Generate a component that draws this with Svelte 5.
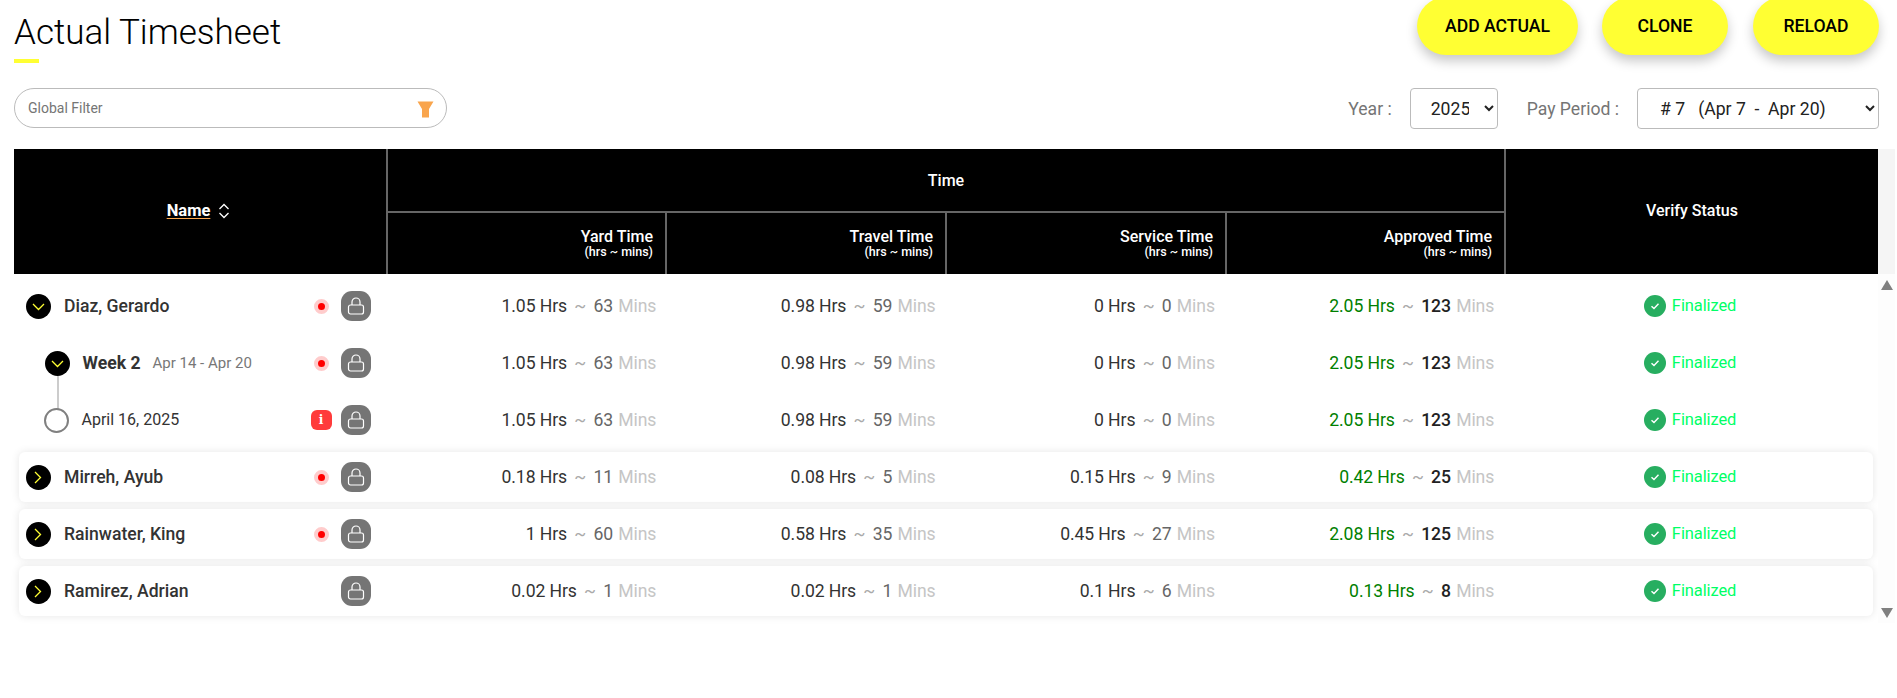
<script>
  const rows = [
    { kind: 'name', open: true, card: false, name: 'Diaz, Gerardo', flag: 'dot', vals: [['1.05', '63'], ['0.98', '59'], ['0', '0'], ['2.05', '123']] },
    { kind: 'week', open: true, card: false, name: 'Week 2', range: 'Apr 14 - Apr 20', flag: 'dot', vals: [['1.05', '63'], ['0.98', '59'], ['0', '0'], ['2.05', '123']] },
    { kind: 'day', card: false, name: 'April 16, 2025', flag: 'info', vals: [['1.05', '63'], ['0.98', '59'], ['0', '0'], ['2.05', '123']] },
    { kind: 'name', open: false, card: true, name: 'Mirreh, Ayub', flag: 'dot', vals: [['0.18', '11'], ['0.08', '5'], ['0.15', '9'], ['0.42', '25']] },
    { kind: 'name', open: false, card: true, name: 'Rainwater, King', flag: 'dot', vals: [['1', '60'], ['0.58', '35'], ['0.45', '27'], ['2.08', '125']] },
    { kind: 'name', open: false, card: true, name: 'Ramirez, Adrian', flag: '', vals: [['0.02', '1'], ['0.02', '1'], ['0.1', '6'], ['0.13', '8']] }
  ];
</script>

{#snippet chevron(open)}
  <span class="toggle">
    <svg width="13" height="13" viewBox="0 0 13 13" fill="none" stroke="#ffff33" stroke-width="1.3">
      {#if open}
        <path d="M1 4 6.5 9.5 12 4" />
      {:else}
        <path d="M3 1 8.5 6.5 3 12" />
      {/if}
    </svg>
  </span>
{/snippet}

<div class="page">
  <div class="top">
    <div class="title-block">
      <h1>Actual Timesheet</h1>
      <div class="rule"></div>
    </div>
    <div class="actions">
      <button class="add">ADD ACTUAL</button>
      <button class="short">CLONE</button>
      <button class="short">RELOAD</button>
    </div>
  </div>

  <div class="filters">
    <div class="search">
      <input placeholder="Global Filter" />
      <svg class="funnel" width="17" height="17" viewBox="0 0 17 17"><path d="M0.5 0.5H16.5L12 8V16.5H5V8Z" fill="#f9a54d" /></svg>
    </div>
    <div class="pickers">
      <span class="lbl">Year :</span>
      <select class="year"><option>2025</option></select>
      <span class="lbl pp">Pay Period :</span>
      <select class="period"><option># 7 &nbsp; (Apr 7 &nbsp;- &nbsp;Apr 20)</option></select>
    </div>
  </div>

  <div class="head-wrap">
    <div class="head">
      <div class="h-name">
        <span class="name-link">Name</span>
        <svg width="12" height="16" viewBox="0 0 12 16" fill="none" stroke="#fff" stroke-width="1.3"><path d="M1.5 6 6 1.5 10.5 6M1.5 10 6 14.5 10.5 10" /></svg>
      </div>
      <div class="h-time">
        <div class="h-time-top">Time</div>
        <div class="h-time-sub">
          {#each ['Yard Time', 'Travel Time', 'Service Time', 'Approved Time'] as t}
            <div class="h-col"><span>{t}</span><small>(hrs ~ mins)</small></div>
          {/each}
        </div>
      </div>
      <div class="h-verify">Verify Status</div>
    </div>
    <div class="sb-head"></div>
  </div>

  <div class="body-wrap">
    <div class="body">
      {#each rows as r}
        <div class="row" class:card={r.card}>
          <div class="c-name">
            {#if r.kind === 'name'}
              {@render chevron(r.open)}
              <span class="nm">{r.name}</span>
            {:else if r.kind === 'week'}
              <span class="indent">{@render chevron(r.open)}<i class="link"></i></span>
              <span class="wk">{r.name}</span>
              <span class="range">{r.range}</span>
            {:else}
              <span class="indent"><span class="ring"></span></span>
              <span class="day">{r.name}</span>
            {/if}
            <span class="flag">
              {#if r.flag === 'dot'}<span class="dot"></span>{/if}
              {#if r.flag === 'info'}<span class="info">i</span>{/if}
            </span>
            <span class="lock">
              <svg width="18" height="18" viewBox="0 0 18 18" fill="none" stroke="#fff" stroke-width="1.2">
                <rect x="1.5" y="8" width="15" height="9" rx="2" />
                <path d="M5 8V5a4 4 0 0 1 8 0V8" />
              </svg>
            </span>
          </div>
          {#each r.vals as v, i}
            <div class="c-val" class:appr={i === 3}>
              <span class="hrs">{v[0]} Hrs</span>
              <span class="tilde">~</span>
              <span class="min">{v[1]}</span>
              <span class="mins">Mins</span>
            </div>
          {/each}
          <div class="c-status">
            <svg width="22" height="22" viewBox="0 0 22 22"><circle cx="11" cy="11" r="11" fill="#27ae60" /><path d="M7.5 11.2 10 13.6 14.5 8.8" fill="none" stroke="#fff" stroke-width="1.4" /></svg>
            <span class="final">Finalized</span>
          </div>
        </div>
      {/each}
    </div>
    <div class="scrollbar">
      <i class="up"></i>
      <i class="down"></i>
    </div>
  </div>
</div>

<style>
  :global(body) {
    margin: 0;
    background: #fff;
    font-family: Roboto, "Liberation Sans", sans-serif;
    color: #333;
  }
  .page { width: 1897px; height: 698px; overflow: hidden; box-sizing: border-box; padding-left: 14px; }
  .top { display: flex; justify-content: space-between; height: 88px; padding-right: 18px; box-sizing: border-box; }
  .title-block { padding-top: 13px; }
  h1 { margin: 0; font-size: 35px; line-height: 40px; font-weight: 300; color: #000; }
  .rule { width: 25px; height: 4px; margin-top: 6px; background: #ffff33; }
  .actions { display: flex; gap: 25px; margin-top: -3px; height: 58px; }
  button {
    width: 161px; height: 58px; border: 0; border-radius: 29px; background: #ffff33; color: #000;
    font: 500 17.6px Roboto, sans-serif; box-shadow: 0 6px 12px rgba(0, 0, 0, .22);
  }
  button.add { margin-right: -1px; }
  button.short { width: 126px; }
  .filters { display: flex; justify-content: space-between; height: 61px; padding-right: 18px; }
  .search {
    width: 433px; height: 40px; box-sizing: border-box; border: 1px solid #bbb; border-radius: 20px;
    display: flex; align-items: center; padding: 0 12px 0 13px;
  }
  .funnel { margin-top: 2px; }
  .search input { flex: 1; min-width: 0; border: 0; outline: 0; padding: 0; font: 14px Roboto, sans-serif; background: none; }
  .search input::placeholder { color: #757575; opacity: 1; }
  .pickers { display: flex; align-items: flex-start; }
  .lbl { font-size: 17.6px; line-height: 42px; color: #757575; margin-right: 18px; }
  .lbl.pp { margin-left: 29px; }
  select {
    height: 41px; box-sizing: border-box; border: 1px solid #bbb; border-radius: 4px; background: #fff;
    font: 17.6px Roboto, sans-serif; color: #222; padding: 0 12px 0 16px;
  }
  .year { width: 88px; }
  .period { width: 242px; padding-left: 18px; }

  .head-wrap { display: flex; }
  .sb-head { width: 17px; background: #f5f5f5; }
  .head {
    width: 1864px; height: 125px; background: #000; color: #fff; display: grid;
    grid-template-columns: 372px 1120px 1fr; font-size: 16px; font-weight: 500;
  }
  .h-name, .h-verify { display: flex; align-items: center; justify-content: center; padding-bottom: 2px; }
  .h-name { gap: 8px; padding-right: 3px; }
  .name-link { font-size: 16.5px; font-weight: 700; text-decoration: underline; text-decoration-color: #f9a54d; text-underline-offset: 2px; }
  .h-time { border-left: 2px solid #666; border-right: 2px solid #666; display: flex; flex-direction: column; }
  .h-time-top { height: 64px; flex: none; display: flex; align-items: center; justify-content: center; border-bottom: 2px solid #666; box-sizing: border-box; }
  .h-time-sub { flex: 1; display: grid; grid-template-columns: 277px 280px 280px 279px; }
  .h-col { display: flex; flex-direction: column; align-items: flex-end; justify-content: center; padding: 0 12px 0 0; line-height: 16px; border-left: 2px solid #666; }
  .h-col:first-child { border-left: 0; }
  .h-col small { font-size: 12.5px; line-height: 13px; }

  .body-wrap { display: flex; height: 349px; }
  .body { width: 1864px; display: flex; flex-direction: column; gap: 7px; padding: 7px 5px 0 5px; box-sizing: border-box; }
  .row { display: grid; grid-template-columns: 368px repeat(4, 279.3px) 1fr; align-items: center; height: 50px; border-radius: 6px; flex: none; }
  .row.card { background: #fff; box-shadow: 0 0 8px rgba(0, 0, 0, .1); }
  .c-name { display: flex; align-items: center; padding-left: 7px; font-size: 17.6px; }
  .toggle { width: 25px; height: 25px; border-radius: 50%; background: #000; display: flex; align-items: center; justify-content: center; flex: none; }
  .nm { margin-left: 13px; font-weight: 500; color: #333; }
  .indent { position: relative; width: 25px; height: 25px; margin-left: 19px; flex: none; display: flex; align-items: center; justify-content: center; }
  .link { position: absolute; left: 11.5px; top: 25px; width: 2px; height: 33px; background: #ccc; }
  .ring { width: 25px; height: 25px; box-sizing: border-box; border: 2px solid #808080; border-radius: 50%; margin-left: -2px; }
  .wk { margin-left: 12.5px; font-weight: 700; font-size: 17.6px; }
  .range { margin-left: 12px; font-size: 15px; color: #777; }
  .day { margin-left: 11.5px; margin-top: -2px; font-size: 16px; color: #333; }
  .flag { margin-left: auto; width: 30px; display: flex; justify-content: center; align-items: center; }
  .dot { width: 7px; height: 7px; border: 4px solid #ffcccc; border-radius: 50%; background: #f00; }
  .info { width: 21px; height: 20px; border-radius: 6px; background: #ff3b3b; color: #fff; font: 700 12px/20px "DejaVu Serif", serif; text-align: center; }
  .lock { width: 30px; height: 30px; margin: 0 16px 0 5px; border-radius: 11px; background: #757575; display: flex; align-items: center; justify-content: center; }
  .c-val { text-align: right; padding-right: 10px; font-size: 17.6px; white-space: nowrap; font-weight: 400; letter-spacing: -0.1px; }
  .hrs { color: #333; }
  .tilde { color: #aaa; margin: 0 3px; }
  .min { color: #666; margin-right: 1px; }
  .mins { color: #c5c5c5; }
  .appr .hrs { color: #008000; }
  .appr .min { color: #222; font-weight: 500; }
  .c-status { display: flex; align-items: center; justify-content: center; gap: 6px; font-size: 16.5px; color: #00ff66; font-weight: 400; padding-left: 3px; }
  .final { margin-top: -2px; letter-spacing: -0.1px; }

  .scrollbar { width: 17px; display: flex; flex-direction: column; justify-content: space-between; align-items: center; padding: 6px 0 5px; box-sizing: border-box; background: #fdfdfd; }
  .scrollbar i { display: block; width: 0; height: 0; border-left: 6px solid transparent; border-right: 6px solid transparent; }
  .up { border-bottom: 10px solid #808080; }
  .down { border-top: 10px solid #808080; }
</style>
